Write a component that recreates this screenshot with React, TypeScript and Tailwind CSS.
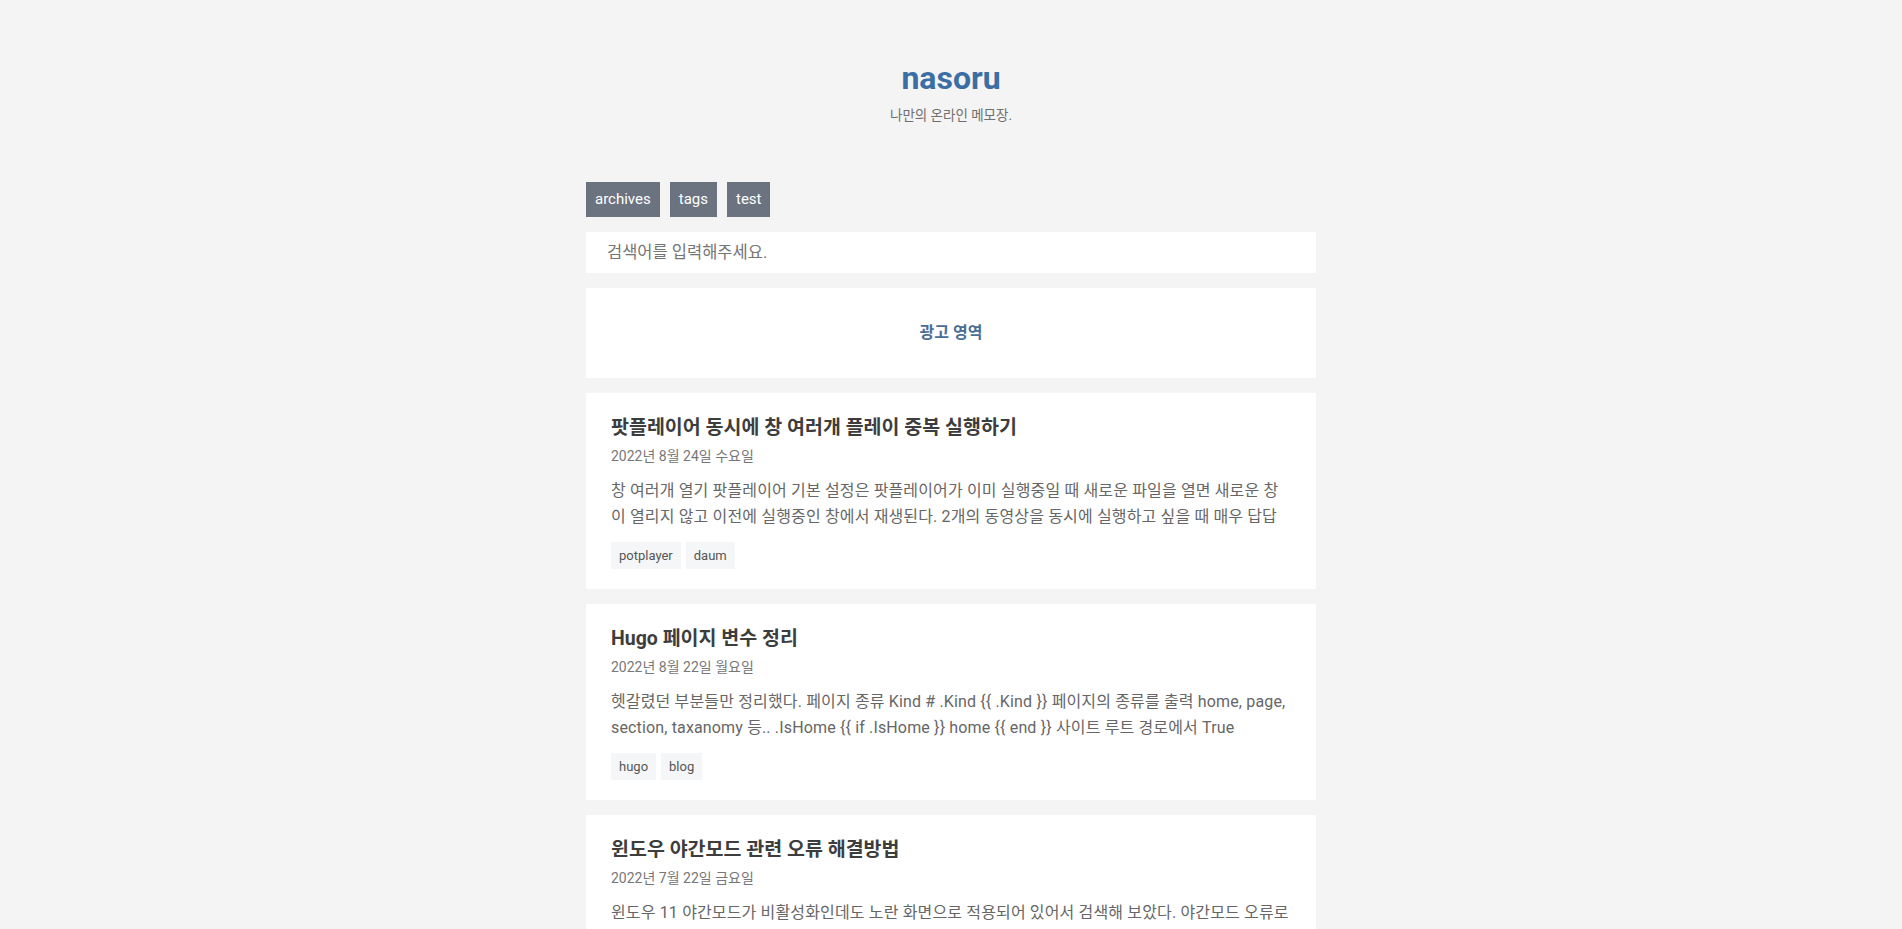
import React from "react";

type Post = {
  title: string;
  date: string;
  excerpt: string;
  tags: string[];
};

const posts: Post[] = [
  {
    title: "팟플레이어 동시에 창 여러개 플레이 중복 실행하기",
    date: "2022년 8월 24일 수요일",
    excerpt:
      "창 여러개 열기 팟플레이어 기본 설정은 팟플레이어가 이미 실행중일 때 새로운 파일을 열면 새로운 창이 열리지 않고 이전에 실행중인 창에서 재생된다. 2개의 동영상을 동시에 실행하고 싶을 때 매우 답답하다. 이럴 때는 설정을 바꿔주면 된다.",
    tags: ["potplayer", "daum"],
  },
  {
    title: "Hugo 페이지 변수 정리",
    date: "2022년 8월 22일 월요일",
    excerpt:
      "헷갈렸던 부분들만 정리했다. 페이지 종류 Kind # .Kind {{ .Kind }} 페이지의 종류를 출력 home, page, section, taxanomy 등.. .IsHome {{ if .IsHome }} home {{ end }} 사이트 루트 경로에서 True .IsNode {{ if .IsNode }} node {{ end }}",
    tags: ["hugo", "blog"],
  },
  {
    title: "윈도우 야간모드 관련 오류 해결방법",
    date: "2022년 7월 22일 금요일",
    excerpt:
      "윈도우 11 야간모드가 비활성화인데도 노란 화면으로 적용되어 있어서 검색해 보았다. 야간모드 오류로 인해 화면이 계속 노랗게 보이는 경우가 있다.",
    tags: ["windows"],
  },
];

const font = "font-['Roboto','Noto_Sans_CJK_KR',sans-serif]";

const PostCard = ({ post }: { post: Post }) => (
  <article className="bg-white px-[25px] pt-[20px] pb-[20px]">
    <h2 className="text-[19.5px] leading-[30px] font-bold text-[#3d3d3d]">
      {post.title}
    </h2>
    <div className="mt-[3px] text-[14px] leading-[20px] text-[#777]">{post.date}</div>
    <p className="mt-[12px] text-[16px] leading-[26px] tracking-[0.15px] text-[#666] max-h-[52px] overflow-hidden">
      {post.excerpt}
    </p>
    <div className="mt-[12px] flex gap-[5px]">
      {post.tags.map((tag) => (
        <span
          key={tag}
          className="h-[27px] px-[8px] flex items-center bg-[#f5f6f8] text-[13px] text-[#555]"
        >
          {tag}
        </span>
      ))}
    </div>
  </article>
);

const App = () => {
  return (
    <div className={`min-h-screen bg-[#f4f4f4] ${font}`}>
      <div className="w-[730px] mx-auto pt-[58px] pb-10">
        <header className="text-center">
          <h1 className="text-[32px] leading-[40px] font-bold text-[#3a6ea5]">nasoru</h1>
          <p className="mt-[7px] text-[13.5px] leading-[20px] text-[#6f6f6f]">나만의 온라인 메모장.</p>
        </header>

        <nav className="mt-[57px] flex gap-[10px]">
          {["archives", "tags", "test"].map((item) => (
            <a
              key={item}
              href="#"
              className="h-[35px] px-[9px] flex items-center bg-[#6b7280] text-white text-[15px]"
            >
              {item}
            </a>
          ))}
        </nav>

        <div className="mt-[15px] flex flex-col gap-[15px]">
          <input
            type="text"
            placeholder="검색어를 입력해주세요."
            className="h-[41px] w-full bg-white px-[21px] text-[16.5px] text-[#555] placeholder:text-[#757575] outline-none"
          />

          <div className="h-[90px] bg-white flex items-center justify-center">
            <span className="text-[16px] font-semibold text-[#4a6d96]">광고 영역</span>
          </div>

          {posts.map((post) => (
            <PostCard key={post.title} post={post} />
          ))}
        </div>
      </div>
    </div>
  );
};

export default App;
